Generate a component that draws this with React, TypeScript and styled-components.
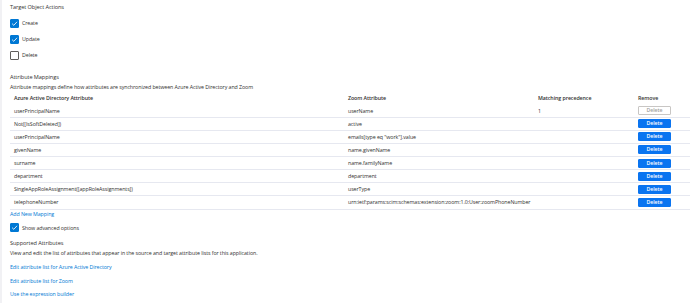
import React from "react";
import styled, { createGlobalStyle } from "styled-components";

const Global = createGlobalStyle`
  html, body { margin: 0; padding: 0; background: #fff; }
  body { font-family: "Open Sans", "Noto Sans", sans-serif; color: #323130; }
  * { box-sizing: border-box; }
`;

const Page = styled.div`
  width: 690px;
  height: 303px;
  overflow: hidden;
  border-left: 2px solid #f1f1f4;
  padding: 2px 0 0 8px;
  font-size: 5.3px;
  letter-spacing: -0.08px;
`;

const SectionTitle = styled.div<{ $mt?: number }>`
  height: 10px;
  line-height: 10px;
  font-size: 5.6px;
  margin-top: ${(p) => p.$mt ?? 0}px;
`;

const Text = styled.div`
  height: 10px;
  line-height: 10px;
`;

const CheckRow = styled.label<{ $mt?: number }>`
  display: flex;
  align-items: center;
  gap: 3px;
  height: 16px;
  margin-top: ${(p) => p.$mt ?? 0}px;
`;

const Box = styled.span<{ $on: boolean }>`
  width: 9px;
  height: 9px;
  border-radius: 1px;
  display: flex;
  align-items: center;
  justify-content: center;
  background: ${(p) => (p.$on ? "#0078d4" : "#fff")};
  border: 1px solid ${(p) => (p.$on ? "#0078d4" : "#605e5c")};
`;

const Checkbox = ({ on, label, mt }: { on: boolean; label: string; mt?: number }) => (
  <CheckRow $mt={mt}>
    <Box $on={on}>
      {on && (
        <svg width="7" height="7" viewBox="0 0 10 10">
          <path d="M1.5 5.2 L4 7.6 L8.6 2.6" fill="none" stroke="#fff" strokeWidth="1.2" />
        </svg>
      )}
    </Box>
    <span>{label}</span>
  </CheckRow>
);

const Table = styled.div`
  display: grid;
  grid-template-columns: 334px 190px 100px 1fr;
`;

const HeadCell = styled.div`
  height: 12.5px;
  line-height: 12.5px;
  padding-left: 4px;
  font-weight: 600;
`;

const Cell = styled.div`
  height: 13.14px;
  display: flex;
  align-items: center;
  padding-left: 4px;
  border-bottom: 1px solid #e6e8f0;
  white-space: nowrap;
`;

const DeleteButton = styled.button<{ $disabled?: boolean }>`
  width: 33px;
  height: 9px;
  padding: 0;
  font-family: inherit;
  font-size: 5.2px;
  letter-spacing: -0.05px;
  line-height: 7px;
  font-weight: 600;
  border-radius: 1px;
  border: 1px solid ${(p) => (p.$disabled ? "#c8c6c4" : "#0a74f0")};
  background: ${(p) => (p.$disabled ? "#fff" : "#0a74f0")};
  color: ${(p) => (p.$disabled ? "#a19f9d" : "#fff")};
`;

const Link = styled.a<{ $mt?: number }>`
  display: block;
  height: 9px;
  line-height: 9px;
  color: #0078d4;
  text-decoration: none;
  margin-top: ${(p) => p.$mt ?? 0}px;
`;

const rows: [string, string, string, boolean][] = [
  ["userPrincipalName", "userName", "1", true],
  ["Not([IsSoftDeleted])", "active", "", false],
  ["userPrincipalName", 'emails[type eq "work"].value', "", false],
  ["givenName", "name.givenName", "", false],
  ["surname", "name.familyName", "", false],
  ["department", "department", "", false],
  ["SingleAppRoleAssignment([appRoleAssignments])", "userType", "", false],
  ["telephoneNumber", "urn:ietf:params:scim:schemas:extension:zoom:1.0:User:zoomPhoneNumber", "", false],
];

export default function App() {
  return (
    <>
      <Global />
      <Page>
        <SectionTitle>Target Object Actions</SectionTitle>
        <Checkbox on label="Create" mt={3} />
        <Checkbox on label="Update" />
        <Checkbox on={false} label="Delete" />

        <SectionTitle $mt={9}>Attribute Mappings</SectionTitle>
        <Text>Attribute mappings define how attributes are synchronized between Azure Active Directory and Zoom</Text>
        <Table>
          <HeadCell>Azure Active Directory Attribute</HeadCell>
          <HeadCell>Zoom Attribute</HeadCell>
          <HeadCell>Matching precedence</HeadCell>
          <HeadCell>Remove</HeadCell>
          {rows.map(([a, b, c, dis], i) => (
            <React.Fragment key={i}>
              <Cell>{a}</Cell>
              <Cell>{b}</Cell>
              <Cell>{c}</Cell>
              <Cell>
                <DeleteButton $disabled={dis}>Delete</DeleteButton>
              </Cell>
            </React.Fragment>
          ))}
        </Table>
        <Link href="#">Add New Mapping</Link>
        <Checkbox on label="Show advanced options" mt={1.4} />

        <SectionTitle $mt={2}>Supported Attributes</SectionTitle>
        <Text>View and edit the list of attributes that appear in the source and target attribute lists for this application.</Text>
        <Link href="#" $mt={5.5}>Edit attribute list for Azure Active Directory</Link>
        <Link href="#" $mt={4.5}>Edit attribute list for Zoom</Link>
        <Link href="#" $mt={4.5}>Use the expression builder</Link>
      </Page>
    </>
  );
}
